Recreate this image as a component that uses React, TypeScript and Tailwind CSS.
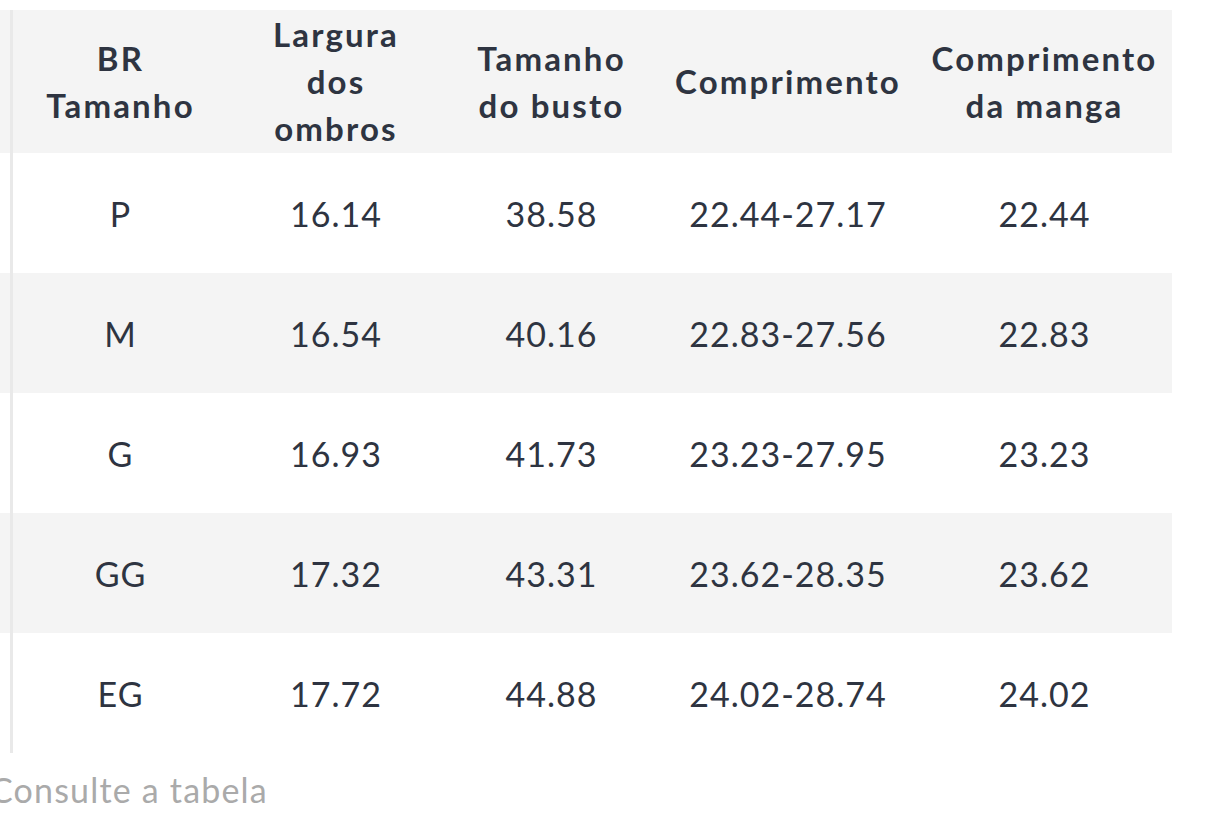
import React from "react";

type Row = {
  size: string;
  ombros: string;
  busto: string;
  comprimento: string;
  manga: string;
};

const rows: Row[] = [
  { size: "P", ombros: "16.14", busto: "38.58", comprimento: "22.44-27.17", manga: "22.44" },
  { size: "M", ombros: "16.54", busto: "40.16", comprimento: "22.83-27.56", manga: "22.83" },
  { size: "G", ombros: "16.93", busto: "41.73", comprimento: "23.23-27.95", manga: "23.23" },
  { size: "GG", ombros: "17.32", busto: "43.31", comprimento: "23.62-28.35", manga: "23.62" },
  { size: "EG", ombros: "17.72", busto: "44.88", comprimento: "24.02-28.74", manga: "24.02" },
];

const grid = "grid grid-cols-[10px_3px_215px_216px_215px_258px_255px]";

const Cell = ({ children }: { children: React.ReactNode }) => (
  <div className="flex items-center justify-center text-center">{children}</div>
);

export default function App() {
  return (
    <div
      className="bg-white w-[1209px] h-[822px] overflow-hidden pt-[10px] text-[#2e3441]"
      style={{ fontFamily: "Lato, 'Noto Sans', sans-serif" }}
    >
      <div className="w-[1172px]">
        {/* header */}
        <div
          className={`${grid} h-[143px] bg-[#f4f4f4] font-bold text-[33px] leading-[47px] tracking-[0.065em]`}
        >
          <div />
          <div className="bg-[#e9e9e9]" />
          <Cell>
            BR
            <br />
            Tamanho
          </Cell>
          <Cell>
            Largura
            <br />
            dos
            <br />
            ombros
          </Cell>
          <Cell>
            Tamanho
            <br />
            do busto
          </Cell>
          <Cell>Comprimento</Cell>
          <Cell>
            Comprimento
            <br />
            da manga
          </Cell>
        </div>

        {rows.map((r, i) => (
          <div
            key={r.size}
            className={`${grid} h-[120px] text-[34px] tracking-[0.03em] ${i % 2 === 1 ? "bg-[#f4f4f4]" : "bg-white"}`}
          >
            <div />
            <div className="bg-[#e9e9e9]" />
            <Cell>{r.size}</Cell>
            <Cell>{r.ombros}</Cell>
            <Cell>{r.busto}</Cell>
            <Cell>{r.comprimento}</Cell>
            <Cell>{r.manga}</Cell>
          </div>
        ))}
      </div>

      <p className="mt-[13px] -ml-[10px] text-[34px] leading-[48px] tracking-[0.035em] text-[#aaaaaa] whitespace-nowrap">
        Consulte a tabela
      </p>
    </div>
  );
}
